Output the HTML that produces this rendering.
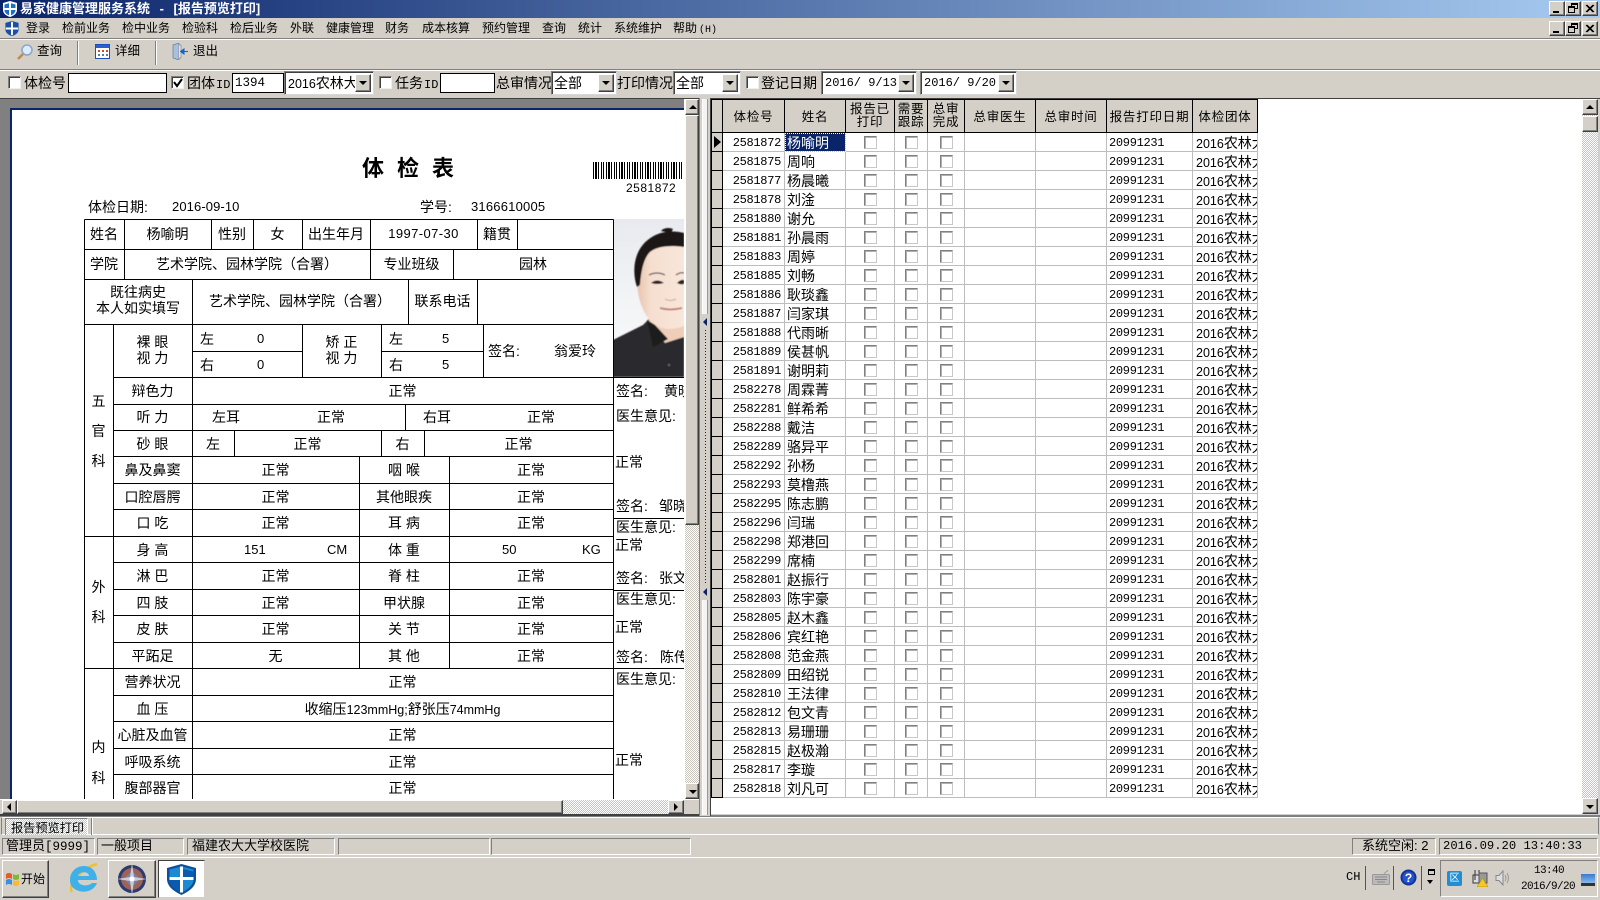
<!DOCTYPE html>
<html lang="zh"><head><meta charset="utf-8"><title>易家健康管理服务系统</title>
<style>
html,body{margin:0;padding:0;width:1600px;height:900px;overflow:hidden;background:#d4d0c8}
body{position:relative;font-family:"Liberation Sans","WenQuanYi Zen Hei","Noto Sans CJK SC",sans-serif;font-size:14px;color:#000}
div,span,svg{box-sizing:border-box}
.a{position:absolute}
.t{position:absolute;white-space:nowrap;line-height:20px;height:20px}
.c{position:absolute;white-space:nowrap;text-align:center}
.m{font-size:12px;line-height:16px;top:20px;height:16px}
.r{border:1px solid;border-color:#fff #404040 #404040 #fff;box-shadow:inset -1px -1px #808080,inset 1px 1px #d4d0c8;background:#d4d0c8;position:absolute}
.s{border:1px solid;border-color:#808080 #fff #fff #808080;position:absolute}
.cb{position:absolute;width:13px;height:13px;background:#fff;border:1px solid;border-color:#808080 #eee #eee #808080;box-shadow:inset 1px 1px #404040}
.inp{position:absolute;background:#fff;border:1px solid #000;height:20px;font-family:"Liberation Mono",monospace;font-size:12.5px;line-height:18px;padding-left:2px}
.sel{position:absolute;background:#fff;height:24px;top:71px;border:1px solid;border-color:#808080 #d8d8d8 #d8d8d8 #808080;box-shadow:inset 1px 1px #404040;line-height:22px;padding-left:3px;font-size:14px;white-space:nowrap;overflow:hidden}
.ar{position:absolute;top:2px;right:2px;width:16px;height:18px;background:#d4d0c8;border:1px solid;border-color:#fff #404040 #404040 #fff;box-shadow:inset -1px -1px #808080}
.ar:after,.up:after,.dn:after{content:"";position:absolute;left:3px;top:6px;border:4px solid transparent;border-top:4px solid #000;border-bottom:0}
.up:after{border-top:0;border-bottom:4px solid #000;top:5px}
.dn:after{top:6px}
.dith{position:absolute;background:repeating-conic-gradient(#fff 0 25%,#c8c4bc 0 50%) 0 0/2px 2px}
.wb{width:16px;height:15px;font-size:0}
.v{line-height:26px;height:26px}
b{font-weight:normal;font-size:12.5px}
.mono{font-family:"Liberation Mono",monospace;font-size:12px}
table,tbody{display:block}
table{position:absolute;left:711px;top:99px;width:547px;background:#fff}
tr{display:flex;height:19px;width:547px}
tr.h{height:34px}
th,td{display:block;flex:none;box-sizing:border-box;overflow:hidden;padding:0}
th{height:34px;background:#d4d0c8;font-weight:normal;font-size:12.5px;line-height:32px;text-align:center;letter-spacing:.8px;border-right:1px solid #000;border-bottom:1px solid #000;border-top:1px solid #000;padding-top:1px}
th.two{line-height:13px;padding-top:3px}
th:first-child,td:first-child{border-left:1px solid #000}
td{height:19px;border-right:1px solid #bdbdbd;border-bottom:1px solid #bdbdbd;white-space:nowrap;font-size:14px;line-height:18px;padding-top:1px;position:relative}
th:nth-child(1),td:nth-child(1){width:12px}
th:nth-child(2),td:nth-child(2){width:62px}
th:nth-child(3),td:nth-child(3){width:61px}
th:nth-child(4),td:nth-child(4){width:49px}
th:nth-child(5),td:nth-child(5){width:33px}
th:nth-child(6),td:nth-child(6){width:37px}
th:nth-child(7),td:nth-child(7){width:71px}
th:nth-child(8),td:nth-child(8){width:71px}
th:nth-child(9),td:nth-child(9){width:86px}
th:nth-child(10),td:nth-child(10){width:65px}
td:first-child{background:#d4d0c8;border-right:1px solid #000;border-bottom:1px solid #000}
td:nth-child(2){text-align:right;padding:2px 3px 0 0;line-height:16px;font-family:"Liberation Mono",monospace;font-size:12px;letter-spacing:-.3px}
td:nth-child(3){padding-left:2px}
td:nth-child(9){padding:2px 0 0 2px;line-height:16px;font-family:"Liberation Mono",monospace;font-size:12px;letter-spacing:-.3px}
td:nth-child(10){padding-left:3px;border-right:1px solid #bdbdbd}
td:nth-child(4):after,td:nth-child(5):after,td:nth-child(6):after{content:"";position:absolute;top:3px;width:13px;height:13px;background:#fff;border:1px solid;border-color:#808080 #c8c8c8 #c8c8c8 #808080;box-sizing:border-box;box-shadow:inset 1px 1px #b0b0b0}
td:nth-child(4):after{left:18px}
td:nth-child(5):after{left:10px}
td:nth-child(6):after{left:12px}
td.sel1{background:#0a246a;color:#fff;outline:1px dotted #fff;outline-offset:-1px}
td.ptr:after{content:"";position:absolute;left:2px;top:3px;border:6px solid transparent;border-left:7px solid #000;border-right:0}
</style></head><body>

<!-- title bar -->
<div class="a" style="left:0;top:0;width:1600px;height:18px;background:linear-gradient(90deg,#0a246a,#a6caf0)"></div>
<svg class="a" style="left:2px;top:0" width="16" height="18" viewBox="0 0 16 18"><path d="M8 1 L15 3 V10 C15 14 11 16 8 17 C5 16 1 14 1 10 V3Z" fill="#fff"/><path d="M8 3 L13.500 4.500 V10 C13.500 13 10.500 15 8 15.500 C5.500 15 2.500 13 2.500 10 V4.500Z" fill="#1b6fc4"/><path d="M7 3h2v12.500h-2zM2.500 8h11v2h-11z" fill="#fff"/></svg>
<div class="t" style="left:20px;top:-1px;color:#fff;font-weight:bold;font-size:13px;word-spacing:6px">易家健康管理服务系统 - [报告预览打印]</div>
<div class="r wb" style="left:1549px;top:1px"><span class="a" style="left:3px;top:9px;width:6px;height:2px;background:#000"></span></div>
<div class="r wb" style="left:1565px;top:1px"><span class="a" style="left:5px;top:1px;width:7px;height:6px;border:1px solid #000;border-top-width:2px"></span><span class="a" style="left:2px;top:4px;width:7px;height:7px;border:1px solid #000;border-top-width:2px;background:#d4d0c8"></span></div>
<div class="r wb" style="left:1582px;top:1px"><svg class="a" style="left:2px;top:2px" width="10" height="9"><path d="M1 1L8 8M2 1L9 8M8 1L1 8M9 1L2 8" stroke="#000"/></svg></div>

<!-- menu -->
<svg class="a" style="left:4px;top:20px" width="16" height="17" viewBox="0 0 16 18"><path d="M8 1 L15 3 V10 C15 14 11 16 8 17 C5 16 1 14 1 10 V3Z" fill="#1b4fa4"/><path d="M7 2h2v14h-2zM1.500 8h13v2h-13z" fill="#fff"/></svg>
<div class="t m" style="left:26px">登录</div>
<div class="t m" style="left:62px">检前业务</div>
<div class="t m" style="left:122px">检中业务</div>
<div class="t m" style="left:182px">检验科</div>
<div class="t m" style="left:230px">检后业务</div>
<div class="t m" style="left:290px">外联</div>
<div class="t m" style="left:326px">健康管理</div>
<div class="t m" style="left:385px">财务</div>
<div class="t m" style="left:422px">成本核算</div>
<div class="t m" style="left:482px">预约管理</div>
<div class="t m" style="left:542px">查询</div>
<div class="t m" style="left:578px">统计</div>
<div class="t m" style="left:614px">系统维护</div>
<div class="t m" style="left:673px">帮助<span style="font-family:'Liberation Mono',monospace;font-size:10px;margin-left:2px">(H)</span></div>
<div class="r wb" style="left:1549px;top:21px"><span class="a" style="left:3px;top:9px;width:6px;height:2px;background:#000"></span></div>
<div class="r wb" style="left:1565px;top:21px"><span class="a" style="left:5px;top:1px;width:7px;height:6px;border:1px solid #000;border-top-width:2px"></span><span class="a" style="left:2px;top:4px;width:7px;height:7px;border:1px solid #000;border-top-width:2px;background:#d4d0c8"></span></div>
<div class="r wb" style="left:1582px;top:21px"><svg class="a" style="left:2px;top:2px" width="10" height="9"><path d="M1 1L8 8M2 1L9 8M8 1L1 8M9 1L2 8" stroke="#000"/></svg></div>
<div class="a" style="left:0;top:38px;width:1600px;height:1px;background:#808080"></div>
<div class="a" style="left:0;top:39px;width:1600px;height:1px;background:#fff"></div>

<!-- toolbar -->
<svg class="a" style="left:16px;top:43px" width="18" height="18" viewBox="0 0 18 18"><circle cx="11" cy="7" r="5" fill="#dcecff" stroke="#8aa6c8" stroke-width="1.500"/><path d="M7 11L2 16" stroke="#c08a4a" stroke-width="2.500"/></svg>
<div class="t" style="left:37px;top:41px;font-size:12.5px">查询</div>
<div class="a" style="left:77px;top:41px;width:2px;height:24px;background:linear-gradient(90deg,#808080 50%,#fff 50%)"></div>
<svg class="a" style="left:95px;top:44px" width="15" height="15" viewBox="0 0 15 15"><rect x=".5" y=".5" width="14" height="14" fill="#fff" stroke="#1f4fbf"/><rect x="1" y="1" width="13" height="3" fill="#2a5fd0"/><path d="M3 6h2v2H3zM7 6h2v2H7zM11 6h2v2h-2z" fill="#c05030"/><path d="M3 10h2v2H3zM7 10h2v2H7zM11 10h2v2h-2z" fill="#5a7fa0"/></svg>
<div class="t" style="left:115px;top:41px;font-size:12.5px">详细</div>
<div class="a" style="left:155px;top:41px;width:2px;height:24px;background:linear-gradient(90deg,#808080 50%,#fff 50%)"></div>
<svg class="a" style="left:172px;top:43px" width="16" height="17" viewBox="0 0 16 17"><path d="M1 2L7 0V17L1 15Z" fill="#a8c0e0" stroke="#6a7a90" stroke-width=".7"/><path d="M7 2h2v13H7" fill="#e8e4d8" stroke="#888" stroke-width=".7"/><path d="M16 8.500h-4V6l-3.500 2.500L12 11V8.500" fill="#1060d8" stroke="#1060d8"/></svg>
<div class="t" style="left:193px;top:41px;font-size:12.5px">退出</div>
<div class="a" style="left:0;top:69px;width:1600px;height:1px;background:#808080"></div>
<div class="a" style="left:0;top:70px;width:1600px;height:1px;background:#fff"></div>

<!-- filter row -->
<div class="cb" style="left:8px;top:76px"></div>
<div class="t" style="left:24px;top:73px">体检号</div>
<div class="inp" style="left:68px;top:73px;width:99px"></div>
<div class="cb" style="left:171px;top:76px"><svg class="a" style="left:1px;top:1px" width="10" height="10"><path d="M1 4L4 8L9 1" fill="none" stroke="#000" stroke-width="2"/></svg></div>
<div class="t" style="left:187px;top:73px">团体<span class="mono" style="margin-left:1px">ID</span></div>
<div class="inp" style="left:232px;top:73px;width:52px">1394</div>
<div class="sel" style="left:284px;width:90px"><b style="font-size:12.5px">2016</b>农林大<span class="ar"></span></div>
<div class="cb" style="left:379px;top:76px"></div>
<div class="t" style="left:395px;top:73px">任务<span class="mono" style="margin-left:1px">ID</span></div>
<div class="inp" style="left:440px;top:73px;width:55px"></div>
<div class="t" style="left:496px;top:73px">总审情况</div>
<div class="sel" style="left:551px;width:66px;padding-left:2px">全部<span class="ar"></span></div>
<div class="t" style="left:617px;top:73px">打印情况</div>
<div class="sel" style="left:673px;width:68px;padding-left:2px">全部<span class="ar"></span></div>
<div class="cb" style="left:746px;top:76px"></div>
<div class="t" style="left:761px;top:73px">登记日期</div>
<div class="sel" style="left:821px;width:96px;font-size:12px;font-family:'Liberation Mono',monospace;padding-left:3px">2016/ 9/13<span class="ar"></span></div>
<div class="sel" style="left:920px;width:97px;font-size:12px;font-family:'Liberation Mono',monospace;padding-left:3px">2016/ 9/20<span class="ar"></span></div>

<!-- main frame -->
<div class="a" style="left:0;top:98px;width:1600px;height:1px;background:#404040"></div>
<div class="a" style="left:0;top:99px;width:685px;height:9px;background:#808080"></div>
<div class="a" style="left:0;top:99px;width:10px;height:701px;background:#808080"></div>
<div class="a" style="left:10px;top:108px;width:675px;height:2px;background:#0a246a"></div>
<div class="a" style="left:10px;top:108px;width:2px;height:692px;background:#0a246a"></div>

<!-- report -->
<div class="a" style="left:12px;top:110px;width:672px;height:689px;background:#fff;overflow:hidden"></div>
<div class="a" style="left:0;top:0;width:684px;height:799px;overflow:hidden">
<svg class="a" style="left:613px;top:219px" width="71" height="158" viewBox="0 0 71 158">
<defs><linearGradient id="bg" x1="0" y1="0" x2="0" y2="1"><stop offset="0" stop-color="#e8eaef"/><stop offset=".6" stop-color="#f4f5f7"/><stop offset="1" stop-color="#f8f8f8"/></linearGradient>
<linearGradient id="sk" x1="0" y1="0" x2="1" y2="0"><stop offset="0" stop-color="#e8c4ae"/><stop offset=".3" stop-color="#f6dfd0"/><stop offset="1" stop-color="#f8e6da"/></linearGradient>
<filter id="bl"><feGaussianBlur stdDeviation=".5"/></filter></defs>
<rect width="71" height="158" fill="url(#bg)"/>
<g filter="url(#bl)">
<path d="M0 121 L30 106 L36 100 H71 V158 H0Z" fill="#2b2b2d"/>
<path d="M36 92 L36 104 L52 124 L71 118 V100Z" fill="#efcdb8"/>
<path d="M24 60 C24 84 34 108 54 110 C62 110 71 108 71 106 V26 H40 C30 34 24 46 24 60Z" fill="url(#sk)"/>
<path d="M24 68 C18 50 22 30 36 20 C46 12 60 11 71 14 V28 C58 26 44 27 37 33 C30 40 28 54 27 66Z" fill="#1c1818"/>
<path d="M48 12 C50 9 56 8 60 10 L58 14Z" fill="#1c1818"/>
<path d="M38 64 Q44 59 51 64 Q44 66 38 64Z" fill="#2a2020"/>
<path d="M64 64 Q68 60 71 61 V65 Q67 66 64 64Z" fill="#2a2020"/>
<path d="M36 56 Q44 52 52 56" fill="none" stroke="#6a5045" stroke-width="1.200"/>
<path d="M63 56 Q67 53 71 54" fill="none" stroke="#6a5045" stroke-width="1.200"/>
<path d="M47 89 Q57 92 69 89" fill="none" stroke="#c07a70" stroke-width="1.700"/>
<path d="M52 80 Q57 83 63 80" fill="none" stroke="#d0a590" stroke-width="1"/>
<path d="M34 101 L40 128 L55 120 L42 106Z" fill="#1a1a1c"/>
</g>
<circle cx="56" cy="146" r="1.500" fill="#555"/>
</svg>
<svg class="a" style="left:0;top:0" width="684" height="799" shape-rendering="crispEdges">
<path d="M84 219H613M84 249H613M84 279H613M84 324H613M192 351H302M381 351H483M113 377H684M113 404H613M113 430H613M113 456H613M113 483H613M113 509H613M84 536H613M113 562H613M113 589H613M113 615H613M113 642H613M84 668H684M113 695H613M113 721H613M113 748H613M113 774H613M613 518H684M613 590H684
M84 219V799M124 219V279M211 219V249M253 219V249M302 219V249M370 219V279M477 219V249M517 219V249M453 249V279M192 279V799M408 279V324M477 279V324M113 324V799M302 324V377M381 324V377M483 324V377M613 219V799M405 404V430M234 430V456M381 430V456M424 430V456M359 456V668M449 456V668" stroke="#000" fill="none" transform="translate(.5 .5)"/>
</svg>
<!-- barcode -->
<div class="a" style="left:593px;top:162px;width:91px;height:17px;background:repeating-linear-gradient(90deg,#000 0 1px,#fff 1px 2px,#000 2px 4px,#fff 4px 5px,#000 5px 6px,#fff 6px 8px,#000 8px 9px,#fff 9px 10px,#000 10px 11px,#fff 11px 13px)"></div>
<div class="t" style="left:626px;top:178px;font-size:12px;letter-spacing:.5px">2581872</div>
<div class="c" style="left:362px;top:154px;width:100px;font-size:22px;line-height:30px;font-weight:bold;letter-spacing:13px;text-align:left">体检表</div>
<div class="t" style="left:88px;top:197px">体检日期:</div>
<div class="t" style="left:172px;top:197px;font-size:13px;letter-spacing:.1px">2016-09-10</div>
<div class="t" style="left:420px;top:197px">学号:</div>
<div class="t" style="left:471px;top:197px;font-size:13px;letter-spacing:.2px">3166610005</div>

<div class="c v" style="left:84px;top:221px;width:40px">姓名</div>
<div class="c v" style="left:124px;top:221px;width:87px">杨喻明</div>
<div class="c v" style="left:211px;top:221px;width:42px">性别</div>
<div class="c v" style="left:253px;top:221px;width:49px">女</div>
<div class="c v" style="left:302px;top:221px;width:68px">出生年月</div>
<div class="c v" style="left:370px;top:221px;width:107px;font-size:13px;letter-spacing:.4px">1997-07-30</div>
<div class="c v" style="left:477px;top:221px;width:40px">籍贯</div>

<div class="c v" style="left:84px;top:251px;width:40px">学院</div>
<div class="c v" style="left:124px;top:251px;width:246px">艺术学院、园林学院（合署）</div>
<div class="c v" style="left:370px;top:251px;width:83px">专业班级</div>
<div class="c v" style="left:453px;top:251px;width:160px">园林</div>

<div class="c" style="left:84px;top:284px;width:108px;line-height:16px">既往病史<br>本人如实填写</div>
<div class="c v" style="left:192px;top:288px;width:216px">艺术学院、园林学院（合署）</div>
<div class="c v" style="left:408px;top:288px;width:69px">联系电话</div>

<div class="c" style="left:113px;top:334px;width:79px;line-height:16px">裸 眼<br>视 力</div>
<div class="t" style="left:200px;top:329px">左</div><div class="t" style="left:257px;top:329px;font-size:13px">0</div>
<div class="t" style="left:200px;top:355px">右</div><div class="t" style="left:257px;top:355px;font-size:13px">0</div>
<div class="c" style="left:302px;top:334px;width:79px;line-height:16px">矫 正<br>视 力</div>
<div class="t" style="left:389px;top:329px">左</div><div class="t" style="left:442px;top:329px;font-size:13px">5</div>
<div class="t" style="left:389px;top:355px">右</div><div class="t" style="left:442px;top:355px;font-size:13px">5</div>
<div class="t" style="left:488px;top:341px">签名:</div><div class="t" style="left:554px;top:341px">翁爱玲</div>

<div class="c v" style="left:84px;top:388px;width:29px">五</div>
<div class="c v" style="left:84px;top:418px;width:29px">官</div>
<div class="c v" style="left:84px;top:448px;width:29px">科</div>

<div class="c v" style="left:113px;top:378px;width:79px">辩色力</div><div class="c v" style="left:192px;top:378px;width:421px">正常</div>
<div class="c v" style="left:113px;top:404px;width:79px">听 力</div><div class="t" style="left:212px;top:407px">左耳</div><div class="t" style="left:317px;top:407px">正常</div><div class="t" style="left:423px;top:407px">右耳</div><div class="t" style="left:527px;top:407px">正常</div>
<div class="c v" style="left:113px;top:431px;width:79px">砂 眼</div><div class="c v" style="left:192px;top:431px;width:42px">左</div><div class="c v" style="left:234px;top:431px;width:147px">正常</div><div class="c v" style="left:381px;top:431px;width:43px">右</div><div class="c v" style="left:424px;top:431px;width:189px">正常</div>
<div class="c v" style="left:113px;top:457px;width:79px">鼻及鼻窦</div><div class="c v" style="left:192px;top:457px;width:167px">正常</div><div class="c v" style="left:359px;top:457px;width:90px">咽 喉</div><div class="c v" style="left:449px;top:457px;width:164px">正常</div>
<div class="c v" style="left:113px;top:484px;width:79px">口腔唇腭</div><div class="c v" style="left:192px;top:484px;width:167px">正常</div><div class="c v" style="left:359px;top:484px;width:90px">其他眼疾</div><div class="c v" style="left:449px;top:484px;width:164px">正常</div>
<div class="c v" style="left:113px;top:510px;width:79px">口 吃</div><div class="c v" style="left:192px;top:510px;width:167px">正常</div><div class="c v" style="left:359px;top:510px;width:90px">耳 病</div><div class="c v" style="left:449px;top:510px;width:164px">正常</div>

<div class="c v" style="left:84px;top:574px;width:29px">外</div>
<div class="c v" style="left:84px;top:604px;width:29px">科</div>

<div class="c v" style="left:113px;top:537px;width:79px">身 高</div><div class="t" style="left:244px;top:540px;font-size:13px">151</div><div class="t" style="left:327px;top:540px;font-size:13px">CM</div><div class="c v" style="left:359px;top:537px;width:90px">体 重</div><div class="t" style="left:502px;top:540px;font-size:13px">50</div><div class="t" style="left:582px;top:540px;font-size:13px">KG</div>
<div class="c v" style="left:113px;top:563px;width:79px">淋 巴</div><div class="c v" style="left:192px;top:563px;width:167px">正常</div><div class="c v" style="left:359px;top:563px;width:90px">脊 柱</div><div class="c v" style="left:449px;top:563px;width:164px">正常</div>
<div class="c v" style="left:113px;top:590px;width:79px">四 肢</div><div class="c v" style="left:192px;top:590px;width:167px">正常</div><div class="c v" style="left:359px;top:590px;width:90px">甲状腺</div><div class="c v" style="left:449px;top:590px;width:164px">正常</div>
<div class="c v" style="left:113px;top:616px;width:79px">皮 肤</div><div class="c v" style="left:192px;top:616px;width:167px">正常</div><div class="c v" style="left:359px;top:616px;width:90px">关 节</div><div class="c v" style="left:449px;top:616px;width:164px">正常</div>
<div class="c v" style="left:113px;top:643px;width:79px">平跖足</div><div class="c v" style="left:192px;top:643px;width:167px">无</div><div class="c v" style="left:359px;top:643px;width:90px">其 他</div><div class="c v" style="left:449px;top:643px;width:164px">正常</div>

<div class="c v" style="left:84px;top:734px;width:29px">内</div>
<div class="c v" style="left:84px;top:765px;width:29px">科</div>

<div class="c v" style="left:113px;top:669px;width:79px">营养状况</div><div class="c v" style="left:192px;top:669px;width:421px">正常</div>
<div class="c v" style="left:113px;top:696px;width:79px">血 压</div><div class="c v" style="left:192px;top:696px;width:421px">收缩压<b>123mmHg;</b>舒张压<b>74mmHg</b></div>
<div class="c v" style="left:113px;top:722px;width:79px">心脏及血管</div><div class="c v" style="left:192px;top:722px;width:421px">正常</div>
<div class="c v" style="left:113px;top:749px;width:79px">呼吸系统</div><div class="c v" style="left:192px;top:749px;width:421px">正常</div>
<div class="c v" style="left:113px;top:775px;width:79px">腹部器官</div><div class="c v" style="left:192px;top:775px;width:421px">正常</div>

<div class="t" style="left:616px;top:381px">签名:</div><div class="t" style="left:664px;top:381px">黄晓</div>
<div class="t" style="left:616px;top:406px">医生意见:</div>
<div class="t" style="left:615px;top:452px">正常</div>
<div class="t" style="left:616px;top:496px">签名:</div><div class="t" style="left:659px;top:496px">邹晓</div>
<div class="t" style="left:616px;top:517px">医生意见:</div>
<div class="t" style="left:615px;top:535px">正常</div>
<div class="t" style="left:616px;top:568px">签名:</div><div class="t" style="left:659px;top:568px">张文</div>
<div class="t" style="left:616px;top:589px">医生意见:</div>
<div class="t" style="left:615px;top:617px">正常</div>
<div class="t" style="left:616px;top:647px">签名:</div><div class="t" style="left:660px;top:647px">陈传</div>
<div class="t" style="left:616px;top:669px">医生意见:</div>
<div class="t" style="left:615px;top:750px">正常</div>
</div>

<!-- left v scrollbar -->
<div class="a" style="left:684px;top:99px;width:16px;height:715px;background:#d4d0c8;border-left:1px solid #fff"></div>
<div class="r up" style="left:685px;top:99px;width:14px;height:16px"></div>
<div class="r" style="left:685px;top:115px;width:14px;height:410px"></div>
<div class="dith" style="left:685px;top:525px;width:14px;height:258px"></div>
<div class="r dn" style="left:685px;top:783px;width:14px;height:16px"></div>
<!-- left h scrollbar -->
<div class="a" style="left:0;top:799px;width:700px;height:15px;background:#d4d0c8;border-top:1px solid #fff"></div>
<div class="r" style="left:2px;top:800px;width:15px;height:14px"><span class="a" style="left:4px;top:2px;border:4px solid transparent;border-right:4px solid #000;border-left:0"></span></div>
<div class="r" style="left:17px;top:800px;width:546px;height:14px"></div>
<div class="dith" style="left:563px;top:800px;width:105px;height:14px"></div>
<div class="r" style="left:668px;top:800px;width:16px;height:14px"><span class="a" style="left:5px;top:2px;border:4px solid transparent;border-left:4px solid #000;border-right:0"></span></div>
<div class="a" style="left:0;top:814px;width:700px;height:2px;background:#404040"></div>

<!-- splitter -->
<div class="a" style="left:699px;top:98px;width:12px;height:718px;background:#d4d0c8;border-left:1px solid #808080;border-right:1px solid #404040"></div>
<div class="a" style="left:702px;top:99px;width:6px;height:215px;background:#f4f4f4;border-left:1px solid #fff;border-right:1px solid #999"></div>
<div class="a" style="left:702px;top:600px;width:6px;height:215px;background:#f4f4f4;border-left:1px solid #fff;border-right:1px solid #999"></div>
<div class="a" style="left:703px;top:318px;border:4px solid transparent;border-right:4px solid #0a246a;border-left:0"></div>
<div class="a" style="left:705px;top:330px;width:1px;height:255px;background:repeating-linear-gradient(180deg,#0a246a 0 1px,transparent 1px 3px)"></div>
<div class="a" style="left:703px;top:588px;border:4px solid transparent;border-right:4px solid #0a246a;border-left:0"></div>

<!-- right grid -->
<div class="a" style="left:711px;top:99px;width:871px;height:715px;background:#fff"></div>
<table>
<tr class="h"><th></th><th>体检号</th><th>姓名</th><th class="two">报告已<br>打印</th><th class="two">需要<br>跟踪</th><th class="two">总审<br>完成</th><th>总审医生</th><th>总审时间</th><th>报告打印日期</th><th>体检团体</th></tr>
<tr><td class="ptr"></td><td>2581872</td><td class="sel1">杨喻明</td><td></td><td></td><td></td><td></td><td></td><td>20991231</td><td><b>2016</b>农林大学</td></tr>
<tr><td></td><td>2581875</td><td>周响</td><td></td><td></td><td></td><td></td><td></td><td>20991231</td><td><b>2016</b>农林大学</td></tr>
<tr><td></td><td>2581877</td><td>杨晨曦</td><td></td><td></td><td></td><td></td><td></td><td>20991231</td><td><b>2016</b>农林大学</td></tr>
<tr><td></td><td>2581878</td><td>刘淦</td><td></td><td></td><td></td><td></td><td></td><td>20991231</td><td><b>2016</b>农林大学</td></tr>
<tr><td></td><td>2581880</td><td>谢允</td><td></td><td></td><td></td><td></td><td></td><td>20991231</td><td><b>2016</b>农林大学</td></tr>
<tr><td></td><td>2581881</td><td>孙晨雨</td><td></td><td></td><td></td><td></td><td></td><td>20991231</td><td><b>2016</b>农林大学</td></tr>
<tr><td></td><td>2581883</td><td>周婷</td><td></td><td></td><td></td><td></td><td></td><td>20991231</td><td><b>2016</b>农林大学</td></tr>
<tr><td></td><td>2581885</td><td>刘畅</td><td></td><td></td><td></td><td></td><td></td><td>20991231</td><td><b>2016</b>农林大学</td></tr>
<tr><td></td><td>2581886</td><td>耿琰鑫</td><td></td><td></td><td></td><td></td><td></td><td>20991231</td><td><b>2016</b>农林大学</td></tr>
<tr><td></td><td>2581887</td><td>闫家琪</td><td></td><td></td><td></td><td></td><td></td><td>20991231</td><td><b>2016</b>农林大学</td></tr>
<tr><td></td><td>2581888</td><td>代雨晰</td><td></td><td></td><td></td><td></td><td></td><td>20991231</td><td><b>2016</b>农林大学</td></tr>
<tr><td></td><td>2581889</td><td>侯甚帆</td><td></td><td></td><td></td><td></td><td></td><td>20991231</td><td><b>2016</b>农林大学</td></tr>
<tr><td></td><td>2581891</td><td>谢明莉</td><td></td><td></td><td></td><td></td><td></td><td>20991231</td><td><b>2016</b>农林大学</td></tr>
<tr><td></td><td>2582278</td><td>周霖菁</td><td></td><td></td><td></td><td></td><td></td><td>20991231</td><td><b>2016</b>农林大学</td></tr>
<tr><td></td><td>2582281</td><td>鲜希希</td><td></td><td></td><td></td><td></td><td></td><td>20991231</td><td><b>2016</b>农林大学</td></tr>
<tr><td></td><td>2582288</td><td>戴洁</td><td></td><td></td><td></td><td></td><td></td><td>20991231</td><td><b>2016</b>农林大学</td></tr>
<tr><td></td><td>2582289</td><td>骆异平</td><td></td><td></td><td></td><td></td><td></td><td>20991231</td><td><b>2016</b>农林大学</td></tr>
<tr><td></td><td>2582292</td><td>孙杨</td><td></td><td></td><td></td><td></td><td></td><td>20991231</td><td><b>2016</b>农林大学</td></tr>
<tr><td></td><td>2582293</td><td>莫橹燕</td><td></td><td></td><td></td><td></td><td></td><td>20991231</td><td><b>2016</b>农林大学</td></tr>
<tr><td></td><td>2582295</td><td>陈志鹏</td><td></td><td></td><td></td><td></td><td></td><td>20991231</td><td><b>2016</b>农林大学</td></tr>
<tr><td></td><td>2582296</td><td>闫瑞</td><td></td><td></td><td></td><td></td><td></td><td>20991231</td><td><b>2016</b>农林大学</td></tr>
<tr><td></td><td>2582298</td><td>郑港回</td><td></td><td></td><td></td><td></td><td></td><td>20991231</td><td><b>2016</b>农林大学</td></tr>
<tr><td></td><td>2582299</td><td>席楠</td><td></td><td></td><td></td><td></td><td></td><td>20991231</td><td><b>2016</b>农林大学</td></tr>
<tr><td></td><td>2582801</td><td>赵振行</td><td></td><td></td><td></td><td></td><td></td><td>20991231</td><td><b>2016</b>农林大学</td></tr>
<tr><td></td><td>2582803</td><td>陈宇豪</td><td></td><td></td><td></td><td></td><td></td><td>20991231</td><td><b>2016</b>农林大学</td></tr>
<tr><td></td><td>2582805</td><td>赵木鑫</td><td></td><td></td><td></td><td></td><td></td><td>20991231</td><td><b>2016</b>农林大学</td></tr>
<tr><td></td><td>2582806</td><td>宾红艳</td><td></td><td></td><td></td><td></td><td></td><td>20991231</td><td><b>2016</b>农林大学</td></tr>
<tr><td></td><td>2582808</td><td>范金燕</td><td></td><td></td><td></td><td></td><td></td><td>20991231</td><td><b>2016</b>农林大学</td></tr>
<tr><td></td><td>2582809</td><td>田绍锐</td><td></td><td></td><td></td><td></td><td></td><td>20991231</td><td><b>2016</b>农林大学</td></tr>
<tr><td></td><td>2582810</td><td>王法律</td><td></td><td></td><td></td><td></td><td></td><td>20991231</td><td><b>2016</b>农林大学</td></tr>
<tr><td></td><td>2582812</td><td>包文青</td><td></td><td></td><td></td><td></td><td></td><td>20991231</td><td><b>2016</b>农林大学</td></tr>
<tr><td></td><td>2582813</td><td>易珊珊</td><td></td><td></td><td></td><td></td><td></td><td>20991231</td><td><b>2016</b>农林大学</td></tr>
<tr><td></td><td>2582815</td><td>赵极瀚</td><td></td><td></td><td></td><td></td><td></td><td>20991231</td><td><b>2016</b>农林大学</td></tr>
<tr><td></td><td>2582817</td><td>李璇</td><td></td><td></td><td></td><td></td><td></td><td>20991231</td><td><b>2016</b>农林大学</td></tr>
<tr><td></td><td>2582818</td><td>刘凡可</td><td></td><td></td><td></td><td></td><td></td><td>20991231</td><td><b>2016</b>农林大学</td></tr>
</table>

<!-- right scrollbar -->
<div class="dith" style="left:1582px;top:99px;width:16px;height:715px"></div>
<div class="r up" style="left:1582px;top:99px;width:16px;height:16px"></div>
<div class="r" style="left:1582px;top:116px;width:16px;height:16px"></div>
<div class="r dn" style="left:1582px;top:798px;width:16px;height:16px"></div>
<div class="a" style="left:711px;top:814px;width:889px;height:2px;background:linear-gradient(#d0d0d0 50%,#808080 50%)"></div>

<!-- tab strip -->
<div class="a" style="left:0;top:816px;width:1600px;height:1px;background:#808080"></div>
<div class="a" style="left:1px;top:817px;width:1598px;height:18px;border:1px solid;border-color:#fff #808080 #fff #808080"></div>
<div class="dith" style="left:5px;top:818px;width:83px;height:17px;border-left:1px solid #808080;border-top:1px solid #808080;border-right:1px solid #fff"></div>
<div class="t" style="left:11px;top:818px;font-size:12.2px">报告预览打印</div>
<div class="a" style="left:91px;top:818px;width:2px;height:17px;background:linear-gradient(90deg,#808080 50%,#fff 50%)"></div>

<!-- status bar -->
<div class="s" style="left:2px;top:838px;width:93px;height:17px"></div><div class="t" style="left:6px;top:836px;font-size:13px">管理员<span style="font-family:'Liberation Mono',monospace;font-size:12.5px">[9999]</span></div>
<div class="s" style="left:97px;top:838px;width:87px;height:17px"></div><div class="t" style="left:101px;top:836px;font-size:13px">一般项目</div>
<div class="s" style="left:187px;top:838px;width:148px;height:17px"></div><div class="t" style="left:192px;top:836px;font-size:13px">福建农大大学校医院</div>
<div class="s" style="left:338px;top:838px;width:152px;height:17px"></div>
<div class="s" style="left:491px;top:838px;width:200px;height:17px"></div>
<div class="s" style="left:1352px;top:838px;width:84px;height:17px"></div><div class="t" style="left:1362px;top:836px;font-size:13px">系统空闲: 2</div>
<div class="s" style="left:1439px;top:838px;width:159px;height:17px"></div><div class="t" style="left:1443px;top:836px;font-family:'Liberation Mono',monospace;font-size:12.2px">2016.09.20 13:40:33</div>
<div class="a" style="left:0;top:857px;width:1600px;height:1px;background:#fff"></div>

<!-- taskbar -->
<div class="r" style="left:2px;top:860px;width:47px;height:38px"></div>
<svg class="a" style="left:5px;top:872px" width="15" height="15" viewBox="0 0 15 15"><path d="M1 2Q4 0 7 2V7Q4 5 1 7Z" fill="#e85a2a"/><path d="M8 2Q11 4 14 2V7Q11 9 8 7Z" fill="#7fba34"/><path d="M1 8Q4 6 7 8V13Q4 11 1 13Z" fill="#3a8fe0"/><path d="M8 8Q11 10 14 8V13Q11 15 8 13Z" fill="#f6bc2a"/></svg>
<div class="t" style="left:21px;top:869px;font-size:12px">开始</div>
<svg class="a" style="left:67px;top:862px" width="33" height="34" viewBox="0 0 33 34"><path d="M5 30C0 24 14 6 30 2" fill="none" stroke="#f0c030" stroke-width="2.500"/><path d="M3 18C3 9 10 4 17 4C25 4 30 10 30 18H11C11 24 21 25 25 21H30C27 29 18 31 12 29C6 27 3 24 3 18Z M11 14H22C22 9 12 9 11 14Z" fill="#3fb0e8" fill-rule="evenodd"/></svg>
<div class="r" style="left:108px;top:860px;width:48px;height:38px"></div>
<svg class="a" style="left:116px;top:862px" width="32" height="34" viewBox="0 0 32 34"><circle cx="16" cy="17" r="14" fill="#2c3a6e"/><circle cx="16" cy="17" r="11" fill="#9a6458"/><circle cx="16" cy="17" r="6" fill="#7a80a8"/><path d="M16 1L18 15L31 17L18 19L16 33L14 19L1 17L14 15Z" fill="#c8ccd8"/><circle cx="16" cy="17" r="2.500" fill="#fff"/></svg>
<div class="a" style="left:158px;top:860px;width:47px;height:38px;background:#fff;border:1px solid;border-color:#404040 #d4d0c8 #d4d0c8 #404040"></div>
<svg class="a" style="left:165px;top:864px" width="33" height="31" viewBox="0 0 33 31"><path d="M16.500 0L31 4V15C31 23 23 28 16.500 31C10 28 2 23 2 15V4Z" fill="#0d4f9a"/><path d="M16.500 2.500L28.500 5.500V15C28.500 21.500 22 26 16.500 28.500C11 26 4.500 21.500 4.500 15V5.500Z" fill="#1d8ad4"/><path d="M15 2.500h3v26h-3zM4.500 13h24v3h-24z" fill="#fff"/><path d="M4.500 16H15V28C10 25 4.500 21 4.500 16ZM18 5L28.500 7.500V13H18Z" fill="#0a5bb0"/></svg>

<!-- tray -->
<div class="t" style="left:1346px;top:867px;font-family:'Liberation Mono',monospace;font-size:12px">CH</div>
<div class="a" style="left:1365px;top:866px;width:1px;height:24px;background:#555"></div>
<svg class="a" style="left:1372px;top:870px" width="18" height="15" viewBox="0 0 18 15"><rect x=".5" y="4.500" width="17" height="10" rx="1" fill="#bbb" stroke="#999"/><path d="M3 7h12M3 9.500h12M5 12h8" stroke="#888"/><path d="M12 4C13 2 15 2 16 0" stroke="#999" fill="none"/></svg>
<div class="a" style="left:1393px;top:866px;width:1px;height:24px;background:#555"></div>
<svg class="a" style="left:1400px;top:869px" width="17" height="17" viewBox="0 0 17 17"><circle cx="8.500" cy="8.500" r="8" fill="#13329a"/><circle cx="8.500" cy="8.500" r="6" fill="#2454c8"/><text x="8.500" y="13" text-anchor="middle" fill="#fff" font-size="12" font-weight="bold" font-family="Liberation Sans">?</text></svg>
<div class="a" style="left:1421px;top:866px;width:1px;height:24px;background:#555"></div>
<div class="a" style="left:1428px;top:869px;width:7px;height:6px;border:1px solid #000;border-top-width:2px"></div>
<div class="a" style="left:1427px;top:880px;border:3px solid transparent;border-top:4px solid #000;border-bottom:0"></div>
<div class="s" style="left:1440px;top:860px;width:158px;height:37px"></div>
<div class="a" style="left:1447px;top:871px;width:15px;height:15px;background:#1e8ed8;border-radius:2px;color:#fff;font-size:10px;line-height:15px;text-align:center">区</div>
<svg class="a" style="left:1471px;top:870px" width="17" height="17" viewBox="0 0 17 17"><path d="M4 0V10M8 0V10M2 5h8v8H2z" fill="#ddd" stroke="#333"/><rect x="8" y="3" width="8" height="10" fill="#999" stroke="#555"/><path d="M11.500 8L17 17H6Z" fill="#f6c820" stroke="#a08000" stroke-width=".5"/></svg>
<svg class="a" style="left:1495px;top:870px" width="16" height="16" viewBox="0 0 16 16"><path d="M1 5.500H4L8 1V15L4 10.500H1Z" fill="#ddd" stroke="#888"/><path d="M10 5Q12 8 10 11M12 3Q15 8 12 13" fill="none" stroke="#999"/></svg>
<div class="t" style="left:1534px;top:861px;font-family:'Liberation Mono',monospace;font-size:11px;letter-spacing:-.6px">13:40</div>
<div class="t" style="left:1521px;top:877px;font-family:'Liberation Mono',monospace;font-size:11px;letter-spacing:-.6px">2016/9/20</div>
<div class="a" style="left:1581px;top:874px;width:14px;height:12px;background:linear-gradient(#3a7ad0,#8ab8e8);border-bottom:3px solid #333"></div>
</body></html>
